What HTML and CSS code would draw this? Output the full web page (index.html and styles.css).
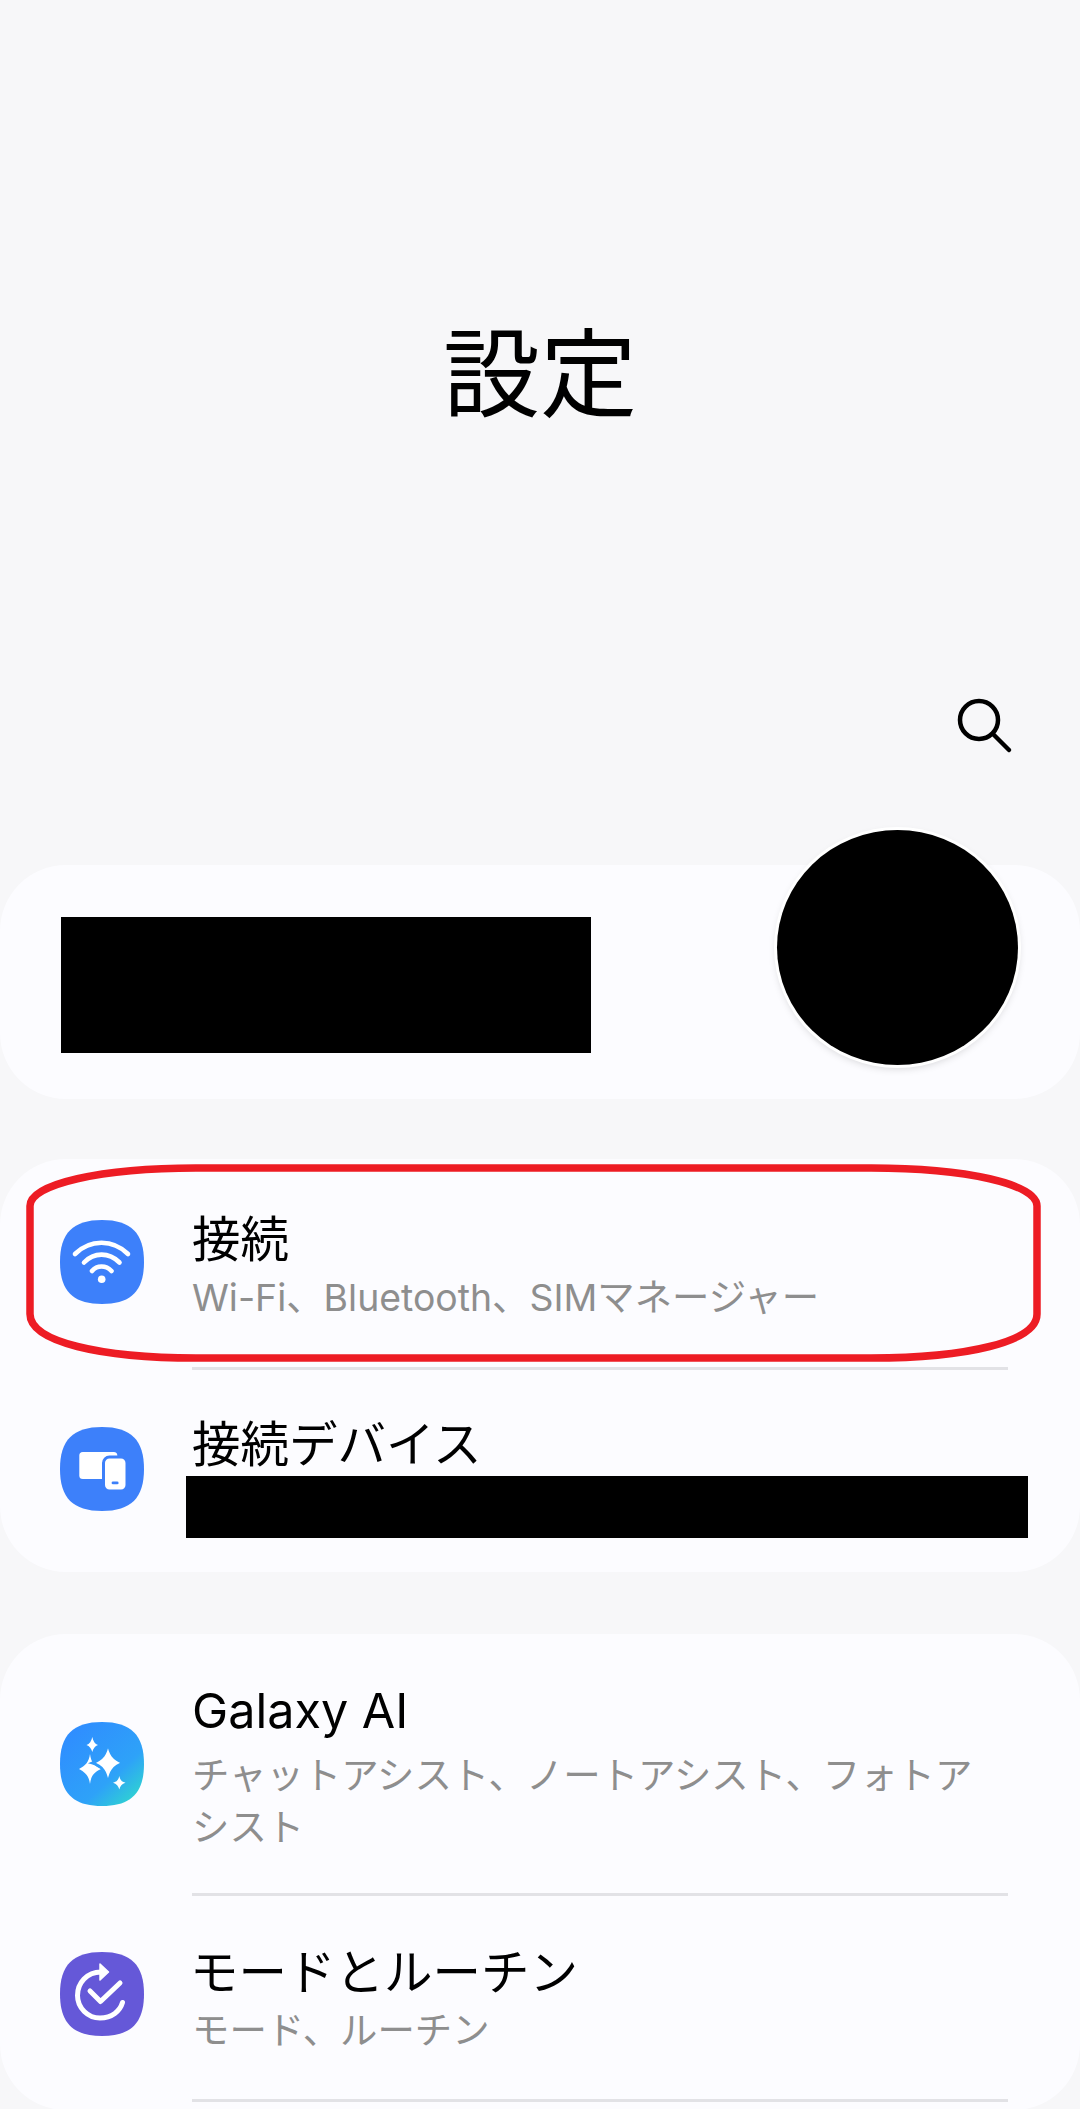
FILE: index.html
```html
<!DOCTYPE html>
<html lang="ja">
<head>
    <meta charset="UTF-8">
    <meta name="viewport" content="width=device-width, initial-scale=1.0">
    <title>設定</title>
    <link rel="stylesheet" href="styles.css">
</head>
<body>
    <header class="header">
        <h1 class="page-title">設定</h1>
        <div class="search-row">
            <svg class="search-icon" viewBox="0 0 60 60" width="60" height="60" fill="none" stroke="#000" stroke-width="4.5" stroke-linecap="round">
                <circle cx="26" cy="25" r="19"/>
                <path d="M40 39 L56 55"/>
            </svg>
        </div>
    </header>

    <section class="card profile-card">
        <div class="redacted profile-name"></div>
        <div class="avatar"></div>
    </section>

    <section class="card">
        <div class="row row-connect">
            <svg class="icon" viewBox="0 0 84 84" width="84" height="84">
                <path fill="#3d80fa" d="M42 0C71 0 84 13 84 42C84 71 71 84 42 84C13 84 0 71 0 42C0 13 13 0 42 0Z"/>
                <g fill="none" stroke="#fff" stroke-width="4.6" stroke-linecap="round">
                    <path d="M15 34C30 19 53 19 68 34"/>
                    <path d="M24 42.5C34 32 49 32 59.5 42.5"/>
                    <path d="M32 51C37 45 46 45 51.5 51"/>
                </g>
                <circle cx="41.7" cy="59.3" r="3.8" fill="#fff"/>
            </svg>
            <div class="row-text">
                <div class="row-title">接続</div>
                <div class="row-sub">Wi-Fi、Bluetooth、SIMマネージャー</div>
            </div>
        </div>
        <!-- hand drawn red marker round the first row -->
        <svg class="marker" viewBox="0 0 1015 198" width="1015" height="198" fill="none" stroke="#ed1c24" stroke-width="7.5">
            <path d="M170 4H845C940 4 1011 20 1011 42V150C1011 178 940 194 845 194H170C75 194 4 178 4 150V42C4 20 75 4 170 4Z"/>
        </svg>
        <div class="divider"></div>
        <div class="row row-devices">
            <svg class="icon" viewBox="0 0 84 84" width="84" height="84">
                <path fill="#3d80fa" d="M42 0C71 0 84 13 84 42C84 71 71 84 42 84C13 84 0 71 0 42C0 13 13 0 42 0Z"/>
                <rect x="19.3" y="25" width="38" height="27" rx="3.5" fill="#fff"/>
                <rect x="43.5" y="30" width="23.5" height="34" rx="6" fill="#fff" stroke="#3d80fa" stroke-width="3"/>
                <rect x="51.6" y="54.5" width="7" height="2.8" rx="1.4" fill="#3d80fa"/>
            </svg>
            <div class="row-text">
                <div class="row-title">接続デバイス</div>
                <div class="redacted device-list"></div>
            </div>
        </div>
    </section>

    <section class="card card-last">
        <div class="row row-ai">
            <svg class="icon" viewBox="0 0 84 84" width="84" height="84">
                <defs>
                    <linearGradient id="ai-grad" gradientUnits="userSpaceOnUse" x1="10" y1="8" x2="76" y2="80">
                        <stop offset="0" stop-color="#2f8dff"/>
                        <stop offset="0.65" stop-color="#2ea2f8"/>
                        <stop offset="1" stop-color="#2fd6cf"/>
                    </linearGradient>
                </defs>
                <path fill="url(#ai-grad)" d="M42 0C71 0 84 13 84 42C84 71 71 84 42 84C13 84 0 71 0 42C0 13 13 0 42 0Z"/>
                <path fill="#fff" d="M32.300 15C33 19 35 22 38 23C35 24 33 27 32.300 30C31.500 27 29.500 24 26.500 23C29.500 22 31.500 19 32.300 15Z"/>
                <path fill="#fff" d="M30 32C31 40 34 44 41 47C34 50 31 54 30 62C29 54 25 50 19 47C25 44 29 40 30 32Z"/>
                <path fill="#fff" stroke="url(#ai-grad)" stroke-width="2.500" d="M48 21C50 32 53 37 64 41C53 44 50 50 48 62C46 50 43 44 32 41C43 37 46 32 48 21Z"/>
                <path fill="#fff" d="M59.300 54C60 58 62 60 65.500 60.700C62 62 60 64 59.300 67.500C58.500 64 56.500 62 53 60.700C56.500 60 58.500 58 59.300 54Z"/>
            </svg>
            <div class="row-text">
                <div class="row-title">Galaxy AI</div>
                <div class="row-sub">チャットアシスト、ノートアシスト、フォトアシスト</div>
            </div>
        </div>
        <div class="divider"></div>
        <div class="row row-modes">
            <svg class="icon" viewBox="0 0 84 84" width="84" height="84">
                <path fill="#6558d8" d="M42 0C71 0 84 13 84 42C84 71 71 84 42 84C13 84 0 71 0 42C0 13 13 0 42 0Z"/>
                <g fill="none" stroke="#fff" stroke-width="5" stroke-linecap="round" stroke-linejoin="round">
                    <path d="M41 20C27 20 17.500 31 17.500 43.500C17.500 56 28 66 40 66C52 66 60 59 62.500 50.500"/>
                    <path d="M30 39L40.500 49.500L60 31"/>
                </g>
                <path fill="#fff" d="M40 12L48.500 20L40 28Z" stroke="#fff" stroke-width="1.500" stroke-linejoin="round"/>
            </svg>
            <div class="row-text">
                <div class="row-title">モードとルーチン</div>
                <div class="row-sub">モード、ルーチン</div>
            </div>
        </div>
        <div class="divider"></div>
    </section>
</body>
</html>
```

FILE: styles.css
```css
html, body {
    margin: 0;
    padding: 0;
}
body {
    width: 1080px;
    height: 2109px;
    overflow: hidden;
    background-color: #f7f7f9;
    font-family: Inter, "Noto Sans CJK JP", sans-serif;
    color: #000;
}
.header {
    height: 865px;
}
.page-title {
    margin: 0;
    padding-top: 303px;
    height: 445px;
    box-sizing: border-box;
    font-family: "Noto Sans CJK JP", sans-serif;
    font-size: 97px;
    font-weight: 400;
    line-height: 128px;
    text-align: center;
}
.search-row {
    display: flex;
    justify-content: flex-end;
    padding: 250px 67px 0 0;
}
.search-icon {
    display: block;
}
.card {
    position: relative;
    background-color: #fcfcff;
    border-radius: 66px;
}
.profile-card {
    height: 234px;
    margin-bottom: 60px;
    padding: 52px 0 0 61px;
    box-sizing: border-box;
}
.redacted {
    background-color: #000;
}
.profile-name {
    width: 530px;
    height: 136px;
}
.avatar {
    position: absolute;
    top: -35px;
    left: 777px;
    width: 241px;
    height: 235px;
    border-radius: 50%;
    background-color: #000;
    box-shadow: 0 0 0 3px #fff, 0 3px 8px rgba(0, 0, 0, 0.18);
}
.row {
    display: flex;
    align-items: center;
    box-sizing: border-box;
    padding-left: 60px;
}
.row-connect {
    height: 208px;
}
.row-devices {
    height: 202px;
}
.row-ai {
    height: 259px;
}
.row-modes {
    height: 203px;
}
.icon {
    display: block;
    flex: none;
}
.row-connect .icon {
    margin-top: -2px;
}
.row-devices .icon {
    margin-top: -5px;
}
.row-modes .icon {
    margin-top: -8px;
}
.row-text {
    margin-left: 48px;
    width: 800px;
}
.row-title {
    font-size: 48.5px;
    line-height: 60px;
}
.row-sub {
    font-size: 37.4px;
    line-height: 52px;
    color: #8e8e8e;
    margin-top: 2px;
}
.row-connect .row-text {
    padding-top: 8px;
}
.row-devices .row-text {
    padding-top: 11px;
}
.row-ai .row-text {
    padding-top: 7px;
}
.row-ai .row-sub {
    margin-top: 9px;
}
.row-modes .row-text {
    padding-top: 4px;
}
.row-modes .row-title {
    margin-left: -2px;
}
.row-modes .row-sub {
    margin-top: 2px;
}
.device-list {
    width: 842px;
    height: 62px;
    margin-left: -6px;
    margin-top: 1px;
}
.divider {
    height: 3px;
    margin: 0 72px 0 192px;
    background-color: #e2e2e6;
}
.marker {
    position: absolute;
    top: 5px;
    left: 26px;
}
.card-last {
    margin-top: 62px;
    height: 476px;
}
```
